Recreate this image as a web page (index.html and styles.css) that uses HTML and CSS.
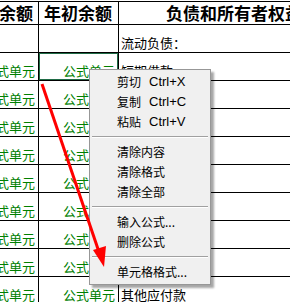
FILE: index.html
```html
<!doctype html>
<html lang="zh">
    <head>
        <meta charset="UTF-8" />
        <title>资产负债表</title>
        <link rel="stylesheet" href="styles.css">
    </head>
    <body>
        <div class="sheet">
            <table class="grid">
                <colgroup>
                    <col class="c1" />
                    <col class="c2" />
                    <col class="c3" />
                </colgroup>
                <tr class="head">
                    <th class="clipped">期末余额</th>
                    <th>年初余额</th>
                    <th>负债和所有者权益</th>
                </tr>
                <tr>
                    <td></td>
                    <td></td>
                    <td class="label">流动负债：</td>
                </tr>
                <tr>
                    <td class="formula">公式单元</td>
                    <td class="formula selected">公式单元</td>
                    <td class="label">短期借款</td>
                </tr>
                <tr><td class="formula">公式单元</td><td class="formula">公式单元</td><td></td></tr>
                <tr><td class="formula">公式单元</td><td class="formula">公式单元</td><td></td></tr>
                <tr><td class="formula">公式单元</td><td class="formula">公式单元</td><td></td></tr>
                <tr><td class="formula">公式单元</td><td class="formula">公式单元</td><td></td></tr>
                <tr><td class="formula">公式单元</td><td class="formula">公式单元</td><td></td></tr>
                <tr><td class="formula">公式单元</td><td class="formula">公式单元</td><td></td></tr>
                <tr><td class="formula">公式单元</td><td class="formula">公式单元</td><td></td></tr>
                <tr>
                    <td class="formula">公式单元</td>
                    <td class="formula">公式单元</td>
                    <td class="label">其他应付款</td>
                </tr>
            </table>

            <!-- right-click menu -->
            <ul class="menu">
                <li class="item"><span>剪切</span><span class="key">Ctrl+X</span></li>
                <li class="item"><span>复制</span><span class="key">Ctrl+C</span></li>
                <li class="item"><span>粘贴</span><span class="key">Ctrl+V</span></li>
                <li class="sep"></li>
                <li class="item">清除内容</li>
                <li class="item">清除格式</li>
                <li class="item">清除全部</li>
                <li class="sep"></li>
                <li class="item">输入公式...</li>
                <li class="item">删除公式</li>
                <li class="sep"></li>
                <li class="item">单元格格式...</li>
            </ul>

            <svg class="arrow" width="290" height="302" viewBox="0 0 290 302">
                <line x1="42" y1="84" x2="99" y2="252" stroke="#ff0000" stroke-width="3" />
                <polygon points="104,267 93,250 106,246" fill="#ff0000" />
            </svg>
        </div>
    </body>
</html>
```

FILE: styles.css
```css
body {
    margin: 0;
    padding: 0;
    background: #fff;
    font-family: "Noto Sans CJK SC", "Liberation Sans", sans-serif;
    overflow: hidden;
}
.sheet {
    position: relative;
    width: 290px;
    height: 302px;
    overflow: hidden;
    padding-top: 1px;
    box-sizing: border-box;
}
.grid {
    border-collapse: collapse;
    table-layout: fixed;
    margin-left: -34px;
    width: 384px;
}
.grid .c1 {
    width: 72px;
}
.grid .c2 {
    width: 80px;
}
.grid .c3 {
    width: 232px;
}
.grid th,
.grid td {
    border: 1px solid #000;
    padding: 0 3px 1px 2px;
    white-space: nowrap;
    overflow: hidden;
}
.grid th {
    height: 21px;
    font-size: 17px;
    font-weight: bold;
    color: #000;
    text-align: center;
    vertical-align: middle;
    line-height: 20px;
}
.grid th.clipped {
    text-align: left;
    padding-left: 0;
    text-indent: -2px;
}
.grid td {
    height: 26px;
    font-size: 13px;
    line-height: 17px;
    vertical-align: bottom;
}
.grid td:nth-child(3) {
    border-right: none;
}
.grid .formula {
    color: #008000;
    text-align: right;
}
.grid .label {
    color: #000;
    text-align: left;
}
.grid .selected {
    position: relative;
}
.grid .selected::after {
    content: "";
    position: absolute;
    top: -1px;
    left: -1px;
    right: -1px;
    bottom: -1px;
    border: 1px solid #e89aae;
    box-shadow: inset 0 0 0 1px #1f6b45;
}
.menu {
    position: absolute;
    left: 89px;
    top: 69px;
    width: 120px;
    margin: 0;
    padding: 2px 0;
    list-style: none;
    background: #f0f0f0;
    border: 1px solid #979797;
    box-shadow: 3px 3px 2px rgba(0, 0, 0, 0.35);
    font-size: 12px;
    color: #000;
}
.menu .item {
    display: flex;
    gap: 8px;
    height: 20px;
    line-height: 20px;
    padding-left: 27px;
}
.menu .key {
    font-family: "Liberation Sans", sans-serif;
    font-size: 13px;
}
.menu .sep {
    height: 10px;
    display: flex;
    align-items: center;
    padding: 0 2px;
}
.menu .sep::before {
    content: "";
    flex: 1;
    height: 1px;
    background: #a0a0a0;
    border-bottom: 1px solid #fff;
}
.arrow {
    position: absolute;
    left: 0;
    top: 0;
    pointer-events: none;
}
```
